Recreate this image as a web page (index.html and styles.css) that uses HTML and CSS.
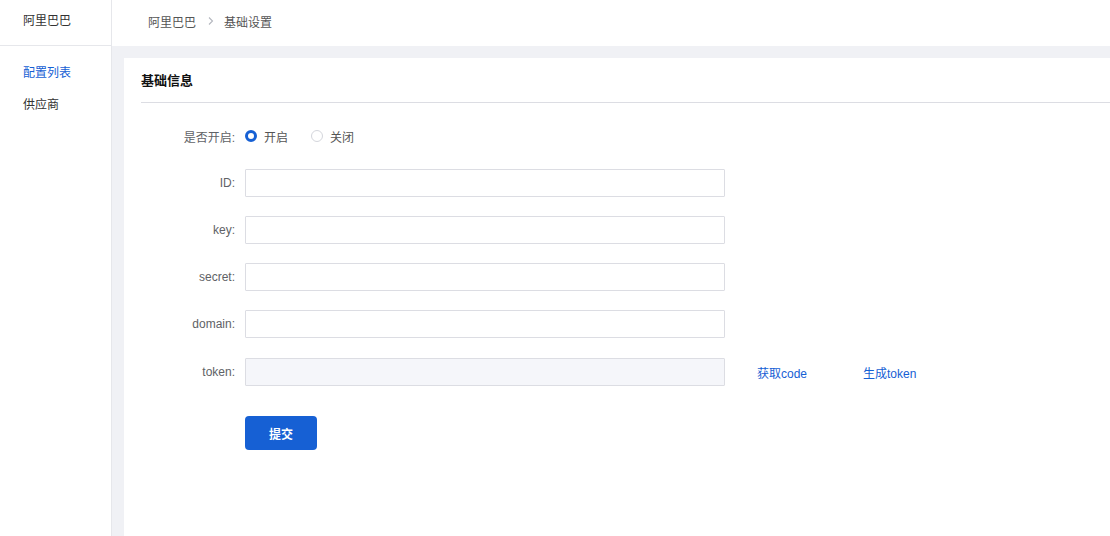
FILE: index.html
```html
<!DOCTYPE html>
<html lang="zh-CN">
  <head>
    <meta charset="UTF-8" />
    <meta name="viewport" content="width=device-width, initial-scale=1.0" />
    <title>基础设置</title>
    <link rel="stylesheet" href="styles.css">
  </head>

  <body>
    <aside class="sidebar">
      <div class="sidebar-title">阿里巴巴</div>
      <ul class="menu">
        <li class="menu-item active">配置列表</li>
        <li class="menu-item">供应商</li>
      </ul>
    </aside>

    <div class="main">
      <div class="topbar">
        <span class="crumb">阿里巴巴</span>
        <svg class="crumb-sep" width="12" height="12" viewBox="0 0 12 12">
          <path d="M4 2.5 L7.5 6 L4 9.5" fill="none" stroke="#b4b7bf" stroke-width="1.1" />
        </svg>
        <span class="crumb">基础设置</span>
      </div>

      <div class="content">
        <div class="card">
          <div class="card-header">基础信息</div>

          <form class="form" onsubmit="return false">
            <div class="form-row">
              <label class="form-label">是否开启:</label>
              <div class="radio-group">
                <label class="radio">
                  <span class="radio-dot checked"></span>
                  开启
                </label>
                <label class="radio">
                  <span class="radio-dot"></span>
                  关闭
                </label>
              </div>
            </div>

            <div class="form-row">
              <label class="form-label">ID:</label>
              <input class="form-input" type="text" />
            </div>

            <div class="form-row">
              <label class="form-label">key:</label>
              <input class="form-input" type="text" />
            </div>

            <div class="form-row">
              <label class="form-label">secret:</label>
              <input class="form-input" type="text" />
            </div>

            <div class="form-row">
              <label class="form-label">domain:</label>
              <input class="form-input" type="text" />
            </div>

            <div class="form-row token-row">
              <label class="form-label">token:</label>
              <input class="form-input" type="text" disabled />
              <a class="text-link code-link">获取code</a>
              <a class="text-link token-link">生成token</a>
            </div>

            <div class="form-row submit-row">
              <button class="submit-button">提交</button>
            </div>
          </form>
        </div>
      </div>
    </div>
  </body>
</html>
```

FILE: styles.css
```css
* {
  box-sizing: border-box;
}

body {
  margin: 0;
  display: flex;
  height: 100vh;
  overflow: hidden;
  font-family: "Liberation Sans", "Noto Sans CJK SC", sans-serif;
  font-size: 12px;
  color: #333;
  background-color: white;
}

.sidebar {
  width: 112px;
  flex-shrink: 0;
  border-right: 1px solid #e6e7eb;
}

.sidebar-title {
  height: 46px;
  line-height: 43px;
  padding-left: 23px;
  border-bottom: 1px solid #e6e7eb;
  color: #333;
}

.menu {
  list-style: none;
  margin: 0;
  padding: 11px 0 0 0;
}

.menu-item {
  height: 32px;
  line-height: 32px;
  padding-left: 23px;
  color: #333;
  cursor: pointer;
}

.menu-item.active {
  color: #1660d4;
}

.main {
  flex: 1;
  display: flex;
  flex-direction: column;
  background-color: #f0f1f5;
}

.topbar {
  height: 46px;
  display: flex;
  align-items: center;
  padding: 0 0 4px 36px;
  background-color: white;
  color: #555;
}

.crumb-sep {
  margin: 0 7px 0 9px;
}

.content {
  flex: 1;
  display: flex;
  padding: 12px 0 0 12px;
}

.card {
  flex: 1;
  background-color: white;
  padding-left: 17px;
}

.card-header {
  padding: 14px 0 12px 0;
  line-height: 18px;
  font-size: 13px;
  font-weight: bold;
  color: #111;
  border-bottom: 1px solid #dcdde3;
}

.form {
  padding-top: 19px;
}

.form-row {
  display: flex;
  align-items: center;
  height: 28px;
  margin-bottom: 19px;
}

.form-label {
  width: 94px;
  margin-right: 10px;
  text-align: right;
  color: #606266;
}

.radio-group {
  display: flex;
  align-items: center;
}

.radio {
  display: flex;
  align-items: center;
  gap: 7px;
  width: 66px;
  color: #555;
  cursor: pointer;
}

.radio-dot {
  width: 12px;
  height: 12px;
  border-radius: 50%;
  border: 1px solid #d4d6dc;
  background-color: white;
}

.radio-dot.checked {
  border: 3.5px solid #1660d4;
}

.form-input {
  width: 480px;
  height: 28px;
  border: 1px solid #dcdde3;
  border-radius: 1px;
  padding: 0 8px;
  font: inherit;
  outline: none;
  background-color: white;
}

.form-input:disabled {
  background-color: #f5f6fa;
}

.token-row {
  margin-top: 20px;
}

.text-link {
  color: #1660d4;
  cursor: pointer;
}

.code-link {
  margin-left: 32px;
}

.token-link {
  margin-left: 56px;
}

.submit-row {
  margin-top: 30px;
  height: 34px;
  padding-left: 104px;
}

.submit-button {
  width: 72px;
  height: 34px;
  border: none;
  border-radius: 4px;
  background-color: #1660d4;
  color: white;
  font: inherit;
  font-weight: bold;
  cursor: pointer;
}
```
